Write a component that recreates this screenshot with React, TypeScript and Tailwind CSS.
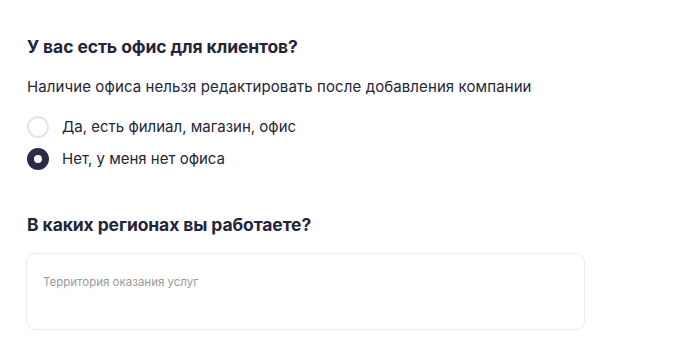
export default function App() {
  return (
    <div className="min-h-[350px] w-[680px] bg-white font-['Inter',sans-serif] text-[#25253a]">
      <div className="pl-[27px] pt-[36px]">
        <h2 className="text-[17.5px] font-bold leading-[22px] tracking-[-0.1px]">У вас есть офис для клиентов?</h2>
        <p className="mt-[19px] text-[15px] leading-[20px] tracking-[0.1px]">
          Наличие офиса нельзя редактировать после добавления компании
        </p>
        <div className="mt-[19px] flex flex-col gap-[10px]">
          <label className="flex h-[22px] items-center gap-[13px]">
            <span className="h-[22px] w-[22px] shrink-0 rounded-full border-2 border-[#e6e6e6]" />
            <span className="text-[15px]">Да, есть филиал, магазин, офис</span>
          </label>
          <label className="flex h-[22px] items-center gap-[13px]">
            <span className="h-[22px] w-[22px] shrink-0 rounded-full border-[7px] border-[#2a2b45]" />
            <span className="text-[15px]">Нет, у меня нет офиса</span>
          </label>
        </div>
        <h2 className="mt-[44px] text-[17.5px] font-bold leading-[22px] tracking-[-0.1px]">В каких регионах вы работаете?</h2>
        <div className="mt-[17px] h-[77px] w-[559px] -ml-px rounded-[9px] border border-[#ececec] px-[16px] pt-[14px]">
          <span className="text-[11.5px] text-[#9a9a9a]">Территория оказания услуг</span>
        </div>
      </div>
    </div>
  );
}
